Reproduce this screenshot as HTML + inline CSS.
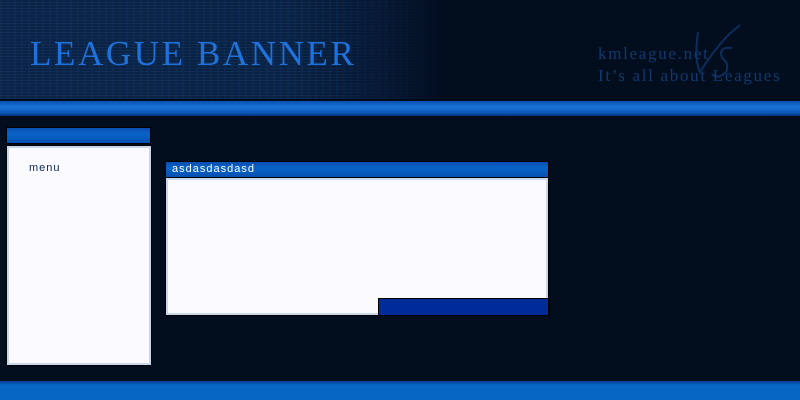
<!DOCTYPE html>
<html><head><style>
*{margin:0;padding:0}
body{width:800px;height:400px;overflow:hidden;background:#020d1e;position:relative;font-family:"Liberation Sans",sans-serif}
.hdr{position:absolute;left:0;top:0;width:800px;height:99px;background:linear-gradient(90deg,#0b2344 0%,#0a2242 35%,#061731 48%,#020d1e 56%,#020d1e 100%)}
.tex{position:absolute;left:0;top:0;width:440px;height:99px;opacity:.35;background:repeating-linear-gradient(0deg,rgba(40,90,160,.5) 0 1px,transparent 1px 3px),repeating-linear-gradient(90deg,rgba(20,60,120,.6) 0 2px,transparent 2px 7px);-webkit-mask-image:linear-gradient(90deg,#000 70%,transparent)}
.title{position:absolute;left:30px;top:34px;font-family:"Liberation Serif",serif;font-size:35px;letter-spacing:2.6px;color:#1f72dc;white-space:nowrap}
.sub{position:absolute;left:598px;top:43px;font-family:"Liberation Serif",serif;font-size:17px;letter-spacing:1.7px;color:#0f3a6e;line-height:22px;white-space:nowrap}
.bar{position:absolute;left:0;top:99px;width:800px;height:17px;background:linear-gradient(#000a1a 0 2px,#0a4fb0 2px,#1a74d8 8px,#0b55b8 14px,#02307a 17px)}
.bot{position:absolute;left:0;top:381px;width:800px;height:19px;background:linear-gradient(#063e96,#0766c4 4px,#0765c3)}
.ph{position:absolute;background:linear-gradient(#0a4eb4,#0a63c8 40%,#0650b0);border:1px solid #000}
.pb{position:absolute;background:#fbfaff;border:2px solid #c6d7ee;outline:1px solid #000}
</style></head><body>
<div class="hdr"></div><div class="tex"></div>
<div class="title">LEAGUE BANNER</div>
<svg style="position:absolute;left:690px;top:20px" width="60" height="60"><path d="M8 12 Q4 40 10 52 Q30 20 50 5 M42 28 Q28 26 32 38 Q40 44 36 52 Q28 60 22 54" fill="none" stroke="#0c2e5e" stroke-width="2"/></svg>
<div class="sub">kmleague.net<br>It’s all about Leagues</div>
<div class="bar"></div>
<div class="ph" style="left:6px;top:127px;width:143px;height:15px"></div>
<div class="pb" style="left:7px;top:146px;width:140px;height:215px"></div>
<div style="position:absolute;left:29px;top:162px;font-size:11px;letter-spacing:1px;color:#0b2a55">menu</div>
<div class="ph" style="left:165px;top:161px;width:382px;height:15px"></div>
<div style="position:absolute;left:172px;top:163px;font-size:11px;letter-spacing:1px;color:#fff">asdasdasdasd</div>
<div class="pb" style="left:166px;top:178px;width:378px;height:133px"></div>
<div style="position:absolute;left:378px;top:298px;width:169px;height:16px;background:#002c9a;border:1px solid #000;border-right-width:2px"></div>
<div class="bot"></div>
</body></html>
